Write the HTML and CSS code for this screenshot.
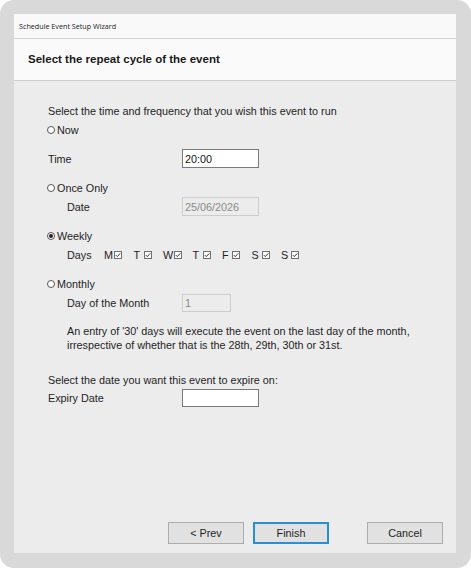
FILE: index.html
```html
<!DOCTYPE html>
<html lang="en">
<head>
<meta charset="utf-8">
<title>Schedule Event Setup Wizard</title>
<link rel="stylesheet" href="styles.css">
</head>
<body>
<div class="frame">
  <div class="window">
    <div class="titlebar">Schedule Event Setup Wizard</div>
    <div class="header">Select the repeat cycle of the event</div>
    <div class="content">
      <div class="row intro">Select the time and frequency that you wish this event to run</div>
      <div class="row r-now"><span class="radio"></span>Now</div>
      <div class="row r-time"><span class="lbl">Time</span><span class="field">20:00</span></div>
      <div class="row r-once"><span class="radio"></span>Once Only</div>
      <div class="row r-date indent"><span class="lbl">Date</span><span class="field disabled">25/06/2026</span></div>
      <div class="row r-weekly"><span class="radio checked"></span>Weekly</div>
      <div class="row r-days indent">
        <span class="days-lbl">Days</span>
        <div class="days">
          <span class="day"><span class="letter">M</span><svg class="cb" viewBox="0 0 8 8"><rect x="0.5" y="0.5" width="7" height="7"/><path d="M1.8 4.1 L3.3 5.6 L6.2 2.4"/></svg></span>
          <span class="day"><span class="letter">T</span><svg class="cb" viewBox="0 0 8 8"><rect x="0.5" y="0.5" width="7" height="7"/><path d="M1.8 4.1 L3.3 5.6 L6.2 2.4"/></svg></span>
          <span class="day"><span class="letter">W</span><svg class="cb" viewBox="0 0 8 8"><rect x="0.5" y="0.5" width="7" height="7"/><path d="M1.8 4.1 L3.3 5.6 L6.2 2.4"/></svg></span>
          <span class="day"><span class="letter">T</span><svg class="cb" viewBox="0 0 8 8"><rect x="0.5" y="0.5" width="7" height="7"/><path d="M1.8 4.1 L3.3 5.6 L6.2 2.4"/></svg></span>
          <span class="day"><span class="letter">F</span><svg class="cb" viewBox="0 0 8 8"><rect x="0.5" y="0.5" width="7" height="7"/><path d="M1.8 4.1 L3.3 5.6 L6.2 2.4"/></svg></span>
          <span class="day"><span class="letter">S</span><svg class="cb" viewBox="0 0 8 8"><rect x="0.5" y="0.5" width="7" height="7"/><path d="M1.8 4.1 L3.3 5.6 L6.2 2.4"/></svg></span>
          <span class="day"><span class="letter">S</span><svg class="cb" viewBox="0 0 8 8"><rect x="0.5" y="0.5" width="7" height="7"/><path d="M1.8 4.1 L3.3 5.6 L6.2 2.4"/></svg></span>
        </div>
      </div>
      <div class="row r-monthly"><span class="radio"></span>Monthly</div>
      <div class="row r-dom indent"><span class="lbl">Day of the Month</span><span class="field disabled short">1</span></div>
      <p class="note">An entry of '30' days will execute the event on the last day of the month,<br>irrespective of whether that is the 28th, 29th, 30th or 31st.</p>
      <div class="row r-expire">Select the date you want this event to expire on:</div>
      <div class="row r-expiry"><span class="lbl">Expiry Date</span><span class="field"></span></div>
      <div class="buttons">
        <button class="btn">&lt; Prev</button>
        <button class="btn default">Finish</button>
        <button class="btn cancel">Cancel</button>
      </div>
    </div>
  </div>
</div>
</body>
</html>
```

FILE: styles.css
```css
* { box-sizing: border-box; }

html, body {
  margin: 0;
  background: #ffffff;
}

.frame {
  width: 471px;
  height: 568px;
  background: #d9d9d9;
  border-radius: 14px;
  padding: 14px 15px 15px 14px;
}

.window {
  height: 100%;
  display: flex;
  flex-direction: column;
  font-family: "Liberation Sans", Arial, sans-serif;
  color: #1e1e1e;
}

.titlebar {
  height: 25px;
  background: #f9f9f9;
  border-bottom: 1px solid #d3d3d3;
  font-family: "Open Sans", "Noto Sans", sans-serif;
  font-size: 7.2px;
  line-height: 24px;
  padding-left: 5px;
  color: #222;
}

.header {
  height: 42px;
  background: #fafafa;
  border-bottom: 1px solid #cfcfcf;
  font-weight: bold;
  font-size: 11.5px;
  line-height: 40px;
  padding-left: 14px;
  color: #1a1a1a;
}

.content {
  flex: 1;
  background: #ececec;
  display: flex;
  flex-direction: column;
  padding: 21px 13px 9px 34px;
  font-size: 10.8px;
}

.row {
  display: flex;
  align-items: center;
  height: 18px;
}

.indent { padding-left: 19px; }

.lbl { width: 134px; flex: none; }
.indent .lbl { width: 115px; }

.r-now { margin-top: 1px; }
.r-time { margin-top: 10px; height: 19px; }
.r-once { margin-top: 11px; }
.r-date { height: 19px; }
.r-weekly { margin-top: 11px; }
.r-days { margin-top: 1px; }
.r-monthly { margin-top: 11px; }
.r-dom { margin-top: 1px; }
.r-expire { margin-top: 19px; }

.radio {
  width: 8px;
  height: 8px;
  border: 1px solid #555;
  border-radius: 50%;
  margin-right: 2px;
  margin-left: -1px;
  background: #fff;
  position: relative;
  flex: none;
}

.radio.checked::after {
  content: "";
  position: absolute;
  left: 1px;
  top: 1px;
  width: 4px;
  height: 4px;
  border-radius: 50%;
  background: #222;
}

.field {
  width: 77px;
  height: 100%;
  background: #fff;
  border: 1px solid #7a7a7a;
  padding-left: 2px;
  display: flex;
  align-items: center;
  color: #111;
}

.field.disabled {
  background: #ececec;
  border-color: #cdcdcd;
  color: #8a8a8a;
}

.field.short { width: 49px; }

.days-lbl { width: 37px; flex: none; }

.days {
  display: flex;
  align-items: center;
}

/* each day is a fixed-width cell: letter, then its checkbox */
.day {
  display: inline-flex;
  align-items: center;
  width: 29.5px;
  flex: none;
}

.letter {
  min-width: 9px;
}

.cb {
  width: 8px;
  height: 8px;
  margin-left: 1px;
}

.cb rect {
  fill: #fff;
  stroke: #6f6f6f;
  stroke-width: 1;
}

.cb path {
  fill: none;
  stroke: #333;
  stroke-width: 1;
}

.note {
  margin: 12px 0 0 19px;
  line-height: 14px;
}

.buttons {
  margin-top: auto;
  display: flex;
  justify-content: flex-end;
}

.btn {
  width: 76px;
  height: 22px;
  background: #e1e1e1;
  border: 1px solid #adadad;
  font-family: "Liberation Sans", Arial, sans-serif;
  font-size: 10.8px;
  color: #1e1e1e;
  padding: 0;
}

.btn + .btn { margin-left: 9px; }

.btn.default {
  border: 2px solid #2a8fd0;
}

.btn.cancel { margin-left: 38px; }
```
